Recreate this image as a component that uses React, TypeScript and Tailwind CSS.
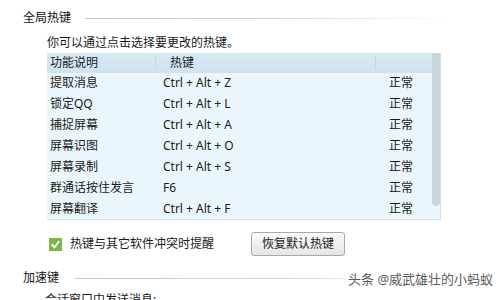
const rows = [
  { name: '提取消息', key: 'Ctrl + Alt + Z', state: '正常' },
  { name: '锁定QQ', key: 'Ctrl + Alt + L', state: '正常' },
  { name: '捕捉屏幕', key: 'Ctrl + Alt + A', state: '正常' },
  { name: '屏幕识图', key: 'Ctrl + Alt + O', state: '正常' },
  { name: '屏幕录制', key: 'Ctrl + Alt + S', state: '正常' },
  { name: '群通话按住发言', key: 'F6', state: '正常' },
  { name: '屏幕翻译', key: 'Ctrl + Alt + F', state: '正常' },
]

function SectionTitle({ label, lineClass }: { label: string; lineClass: string }) {
  return (
    <div className="flex items-center h-[16px] pl-[23px]">
      <span className="text-[12px] leading-[16px] text-[#111]">{label}</span>
      <div className={lineClass} />
    </div>
  )
}

export default function App() {
  return (
    <div className="relative w-[500px] h-[300px] overflow-hidden bg-white text-[#1a1a1a] font-['Noto_Sans','Noto_Sans_CJK_SC',sans-serif]">
      <div className="flex flex-col pt-[10px]">
        {/* 全局热键 */}
        <SectionTitle
          label="全局热键"
          lineClass="ml-[14px] mr-[45px] flex-1 h-px bg-gradient-to-r from-[#b9cad4] via-[#c9d7df] to-white"
        />
        <p className="mt-[9px] ml-[47px] h-[16px] text-[12px] leading-[16px]">你可以通过点击选择要更改的热键。</p>

        {/* hotkey list */}
        <div className="mt-[2px] ml-[47px] w-[394px] h-[167px] flex border-b border-r border-[#d3dee5] bg-[#ebf6fc]">
          <div className="w-[385px] flex flex-col">
            <div className="h-[20px] flex items-center bg-gradient-to-b from-[#d9e9f3] to-[#cfe2ee] text-[12px]">
              <div className="w-[108px] pl-[3px]">功能说明</div>
              <div className="w-px h-[14px] bg-[#eef5f9] border-l border-[#c3d5e0]" />
              <div className="w-[219px] pl-[14px]">热键</div>
              <div className="w-px h-[14px] bg-[#eef5f9] border-l border-[#c3d5e0]" />
              <div className="flex-1" />
            </div>
            {rows.map((r) => (
              <div key={r.name} className="h-[21px] flex items-center text-[12px] leading-[16px]">
                <div className="w-[108px] pl-[3px] whitespace-nowrap">{r.name}</div>
                <div className="w-[234px] pl-[8px] whitespace-nowrap">{r.key}</div>
                <div className="flex-1">{r.state}</div>
              </div>
            ))}
          </div>
          <div className="w-[8px] flex flex-col">
            <div className="h-[153px] bg-[#c9d5dc] rounded-b-[4px]" />
          </div>
        </div>

        {/* options */}
        <div className="mt-[12px] h-[24px] flex items-center">
          <div className="ml-[49px] w-[13px] h-[13px] bg-[#7ab648] flex items-center justify-center">
            <svg width="11" height="11" viewBox="0 0 12 12" fill="none" stroke="white" strokeWidth="2" strokeLinecap="square">
              <polyline points="2.5 6.5 5 9 9.5 3" />
            </svg>
          </div>
          <span className="ml-[8px] w-[181px] text-[12px] leading-[16px]">热键与其它软件冲突时提醒</span>
          <button className="w-[94px] h-[24px] rounded-[3px] border border-[#a9a9a9] bg-gradient-to-b from-[#fafafa] to-[#e6e6e6] text-[12px] leading-[16px] text-[#222]">
            恢复默认热键
          </button>
        </div>

        {/* 加速键 */}
        <div className="mt-[14px]">
          <SectionTitle label="加速键" lineClass="ml-[16px] mr-[45px] flex-1 h-px bg-gradient-to-r from-[#b9cad4] via-[#c9d7df] to-white" />
        </div>
        <p className="mt-[6px] ml-[45px] text-[12px] leading-[16px]">会话窗口中发送消息:</p>
      </div>

      {/* watermark */}
      <div className="absolute left-[346px] top-[270px] pl-[2px] h-[18px] bg-white text-[13px] leading-[18px] text-[#5a5a5a] whitespace-nowrap">
        头条 @威武雄壮的小蚂蚁
      </div>
    </div>
  )
}
